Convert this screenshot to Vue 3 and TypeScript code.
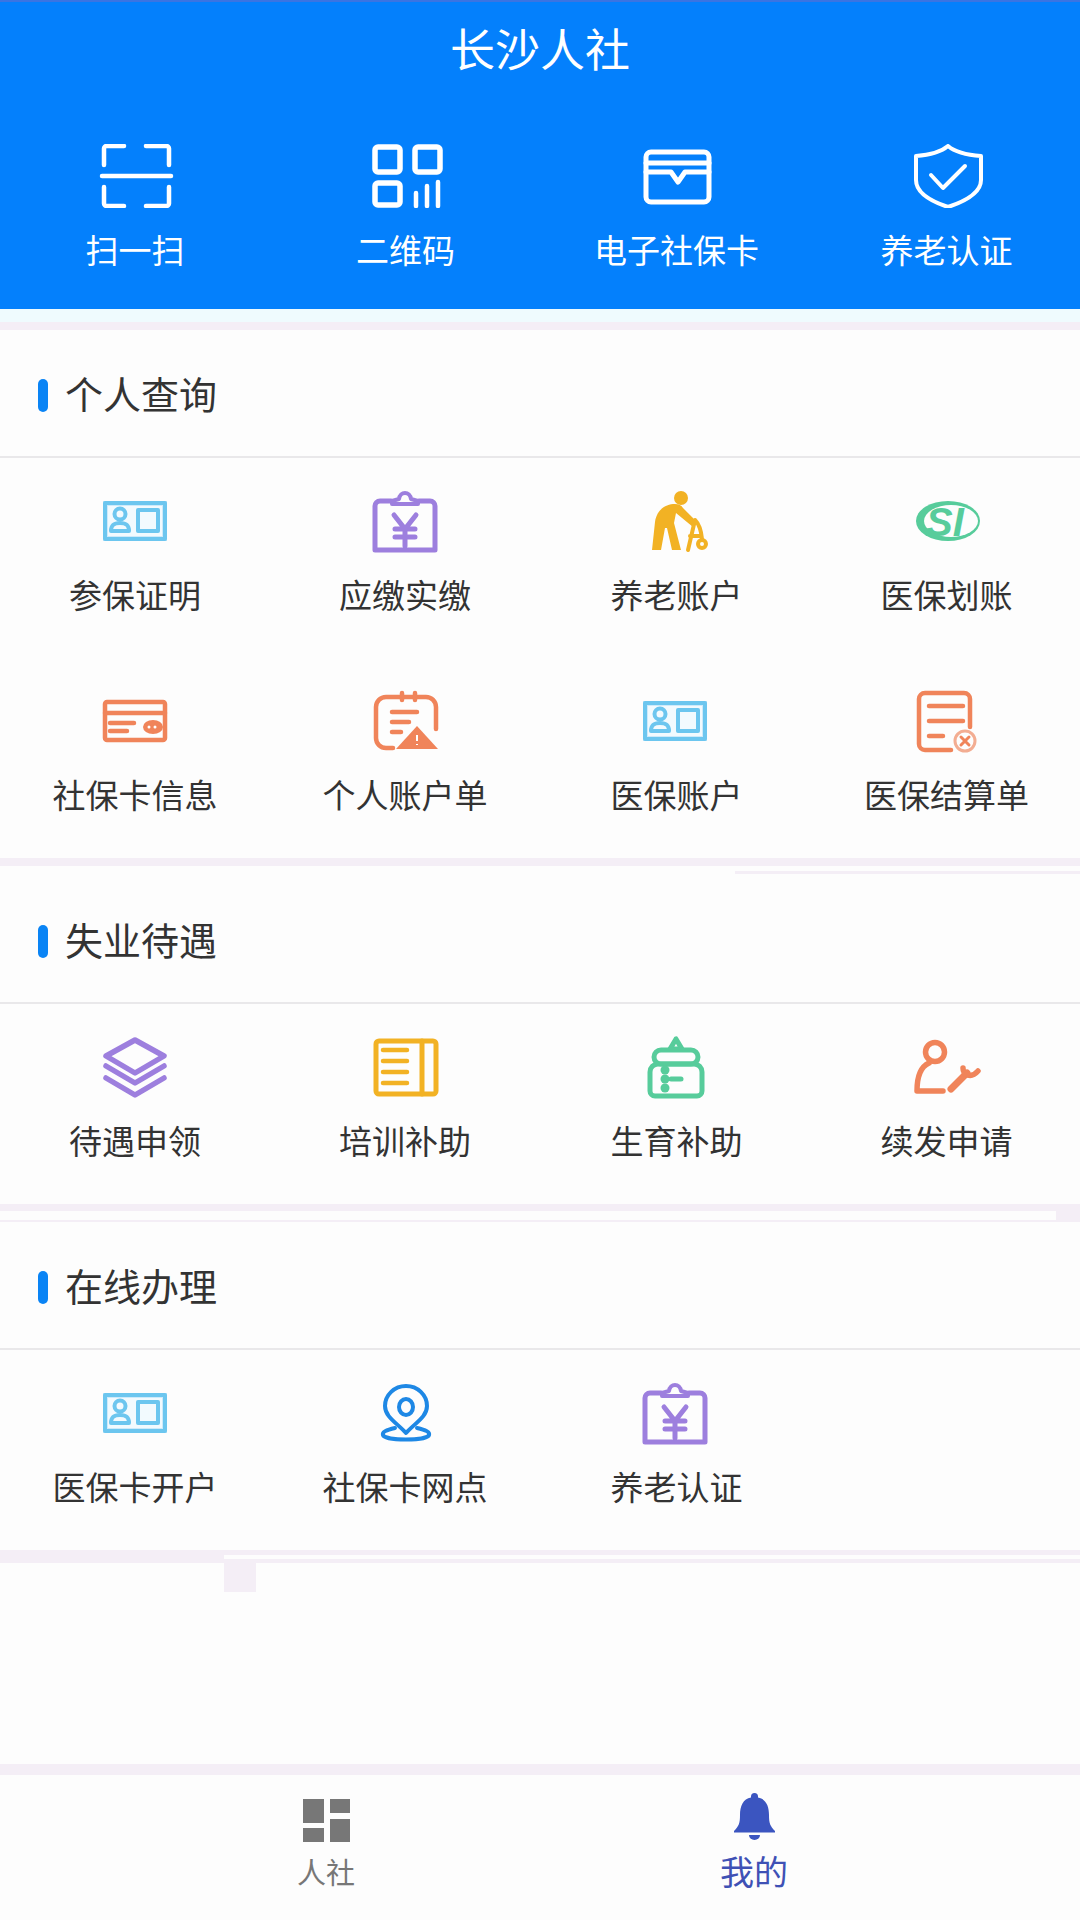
<template>
  <div class="page">
    <header class="top">
      <h1 class="top-title">长沙人社</h1>
      <div class="top-actions">
        <div v-for="item in topActions" :key="item.label" class="top-action">
          <svg class="icon" viewBox="0 0 80 64" v-html="icons[item.icon]"></svg>
          <span>{{ item.label }}</span>
        </div>
      </div>
    </header>

    <section v-for="group in groups" :key="group.title" class="group">
      <div class="band" :class="group.band"></div>
      <div class="group-head">
        <i class="group-mark"></i>
        <h2>{{ group.title }}</h2>
      </div>
      <div class="group-grid">
        <div v-for="item in group.items" :key="item.label" class="cell">
          <svg class="icon" viewBox="0 0 80 64" v-html="icons[item.icon]"></svg>
          <span>{{ item.label }}</span>
        </div>
      </div>
    </section>

    <div class="band band-end"></div>
    <div class="spacer"></div>

    <nav class="tabs">
      <div class="tab">
        <svg class="tab-icon" viewBox="0 0 47 50">
          <rect x="0" y="6" width="21" height="24" />
          <rect x="27" y="6" width="20" height="14" />
          <rect x="0" y="35" width="21" height="14" />
          <rect x="27" y="26" width="20" height="23" />
        </svg>
        <span>人社</span>
      </div>
      <div class="tab active">
        <svg class="tab-icon" viewBox="0 0 41 50">
          <path d="M20.5 0a3.500 3.500 0 0 1 3.500 3.500v1C32 6 35 13 35 22c0 8 1 11 6 16v1.500H0V38c5-5 6-8 6-16C6 13 9 6 17 4.500v-1a3.500 3.500 0 0 1 3.500-3.500Z" />
          <path d="M15 42h11a5.500 5 0 0 1-11 0Z" />
        </svg>
        <span>我的</span>
      </div>
    </nav>
  </div>
</template>

<script setup lang="ts">
interface Item {
  label: string
  icon: string
}

interface Group {
  title: string
  band: string
  items: Item[]
}

const line = (color: string, width: number, body: string) =>
  `<g fill="none" stroke="${color}" stroke-width="${width}" stroke-linecap="round" stroke-linejoin="round">${body}</g>`

const BLUE = '#6cc6ef'
const PURPLE = '#9d7fde'
const ORANGE = '#f0845a'
const YELLOW = '#f2b224'
const GREEN = '#57cc9b'

const idCard = `<rect x="8" y="12" width="64" height="40" fill="#cdeafa"/>
  <rect x="13" y="17" width="54" height="30" fill="#f2fafe"/>` +
  line(BLUE, 4, `<rect x="10" y="14" width="60" height="36"/>
    <circle cx="25" cy="25" r="5.500"/><path d="M16 42c0-6 3-8 9-8s9 2 9 8Z"/>
    <rect x="43" y="21" width="20" height="21"/>`)

const clipboard = line(PURPLE, 5, `<path d="M26 12H15a5 5 0 0 0-5 5v44h60V17a5 5 0 0 0-5-5H54"/>`) +
  line(PURPLE, 4, `<path d="M27 15h26v-3l-7-2c-1-8-11-8-12 0l-7 2Z"/>`) +
  line(PURPLE, 5, `<path d="M29 26l11 14 11-14M40 40v17M30 40h20M30 48h20"/>`)

const icons: Record<string, string> = {
  scan: line('#fff', 4.5, `<path d="M9 21V4.500a2.500 2.500 0 0 1 2.500-2.500H29"/><path d="M51 2h20.500a2.500 2.500 0 0 1 2.500 2.500V21"/>
    <path d="M7 32h69"/><path d="M9 43v16.500a2.500 2.500 0 0 0 2.500 2.500H29"/><path d="M74 43v16.500a2.500 2.500 0 0 1-2.500 2.500H51"/>`),
  qr: line('#fff', 5.5, `<rect x="10" y="3" width="25" height="25" rx="3"/><rect x="50" y="3" width="25" height="25" rx="3"/>
    <rect x="10" y="39" width="25" height="22" rx="3"/>`) +
    line('#fff', 4.5, `<path d="M51 49v13M62 42v20M73 38v24"/>`),
  card: line('#fff', 5, `<rect x="11" y="8" width="63" height="50" rx="5"/><path d="M11 19h63"/><path d="M11 28h25l7 10 7-10h24"/>`),
  shield: line('#fff', 4, `<path d="M43 2c7 6 19 9 33 10v24c0 14-18 22-33 27-15-5-32-13-32-27V12c14-1 25-4 32-10Z"/><path d="M26 31l12 13 22-22"/>`),
  idCard,
  clipboard,
  elder: `<circle cx="46" cy="9" r="7" fill="${YELLOW}"/>
    <path fill="${YELLOW}" d="M40 15c-9 0-18 5-20 18l-3 28h9l4-22h2l5 22h9l-7-27 2-10 17 14 5-4-15-15c-2-3-4-4-8-4Z"/>` +
    line(YELLOW, 4, `<path d="M60 31c4 4 6 9 7 19M60 31l-7 30M55 47h11"/><circle cx="67" cy="55" r="4"/>`),
  si: `<ellipse cx="43" cy="32" rx="32" ry="20" fill="${GREEN}"/><ellipse cx="46" cy="32" rx="27" ry="16" fill="#fdfdfd"/>
    <text x="21" y="47" font-size="40" font-weight="700" font-style="italic" font-family="Liberation Sans, sans-serif" fill="${GREEN}">SI</text>`,
  bankCard: line(ORANGE, 4.5, `<rect x="10" y="13" width="60" height="38" rx="2"/><path d="M10 24h60"/><path d="M15 34h24M15 42h17"/>`) +
    `<ellipse cx="58" cy="38" rx="10" ry="7" fill="${ORANGE}"/><circle cx="54" cy="38" r="1.500" fill="#fff"/><circle cx="60" cy="38" r="1.500" fill="#fff"/>`,
  report: line(ORANGE, 4.5, `<path d="M28 59h-7a10 10 0 0 1-10-10V18a10 10 0 0 1 10-10h40a10 10 0 0 1 10 10v22"/><path d="M37 4v7M50 4v7"/>`) +
    line(ORANGE, 4.5, `<path d="M27 23h25M27 33h17M27 43h9"/>`) +
    `<path d="M52 37l21 23H31Z" fill="${ORANGE}"/><path d="M52 46v6M52 55v1" stroke="#fff" stroke-width="2"/>`,
  bill: line(ORANGE, 4.5, `<path d="M46 61H20a6 6 0 0 1-6-6V10a6 6 0 0 1 6-6h39a6 6 0 0 1 6 6v28"/>`) +
    line(ORANGE, 4.5, `<path d="M24 17h34M24 32h34M24 47h14"/>`) +
    `<circle cx="60" cy="52" r="10" fill="#fdfdfd" stroke="#f3ad92" stroke-width="3"/>` +
    line(ORANGE, 3, `<path d="M56 48l8 8M64 48l-8 8"/>`),
  layers: line(PURPLE, 5.5, `<path d="M40 5l29 16-29 17-29-17Z"/><path d="M11 31l29 17 29-17"/><path d="M11 43l29 17 29-17"/>`),
  book: line(YELLOW, 5, `<rect x="11" y="6" width="60" height="53" rx="3"/><path d="M57 6v53"/>`) +
    line(YELLOW, 4.5, `<path d="M18 15h24M18 26h24M18 37h24M18 48h24"/>`),
  bottle: line(GREEN, 5, `<path d="M41 4l-6 10h12Z"/><path d="M26 15h30a7 7 0 0 1 7 7 7 7 0 0 1-7 7H26a7 7 0 0 1-7-7 7 7 0 0 1 7-7Z"/>
    <path d="M23 29h36a8 8 0 0 1 8 8v19a5 5 0 0 1-5 5H20a5 5 0 0 1-5-5V37a8 8 0 0 1 8-8Z"/><path d="M36 44h10"/>`) +
    `<circle cx="30" cy="35" r="4.500" fill="${GREEN}"/><circle cx="30" cy="44" r="4.500" fill="${GREEN}"/><circle cx="30" cy="53" r="4.500" fill="${GREEN}"/>`,
  userTool: line(ORANGE, 5.5, `<circle cx="30" cy="17" r="9.500"/><path d="M24 28c-9 4-12 14-12 28h26"/>`) +
    line(ORANGE, 7, `<path d="M46 54l16-16"/>`) +
    line(ORANGE, 5.5, `<path d="M58 33c0 7 8 11 15 3"/>`),
  pin: line('#1e88e5', 4, `<path d="M41 52C32 42 20 36 20 25a21 20 0 0 1 42 0c0 11-12 17-21 27Z"/><ellipse cx="41" cy="26" rx="7" ry="8"/>
    <path d="M30 47c-9 2-13 4-12 7 2 6 44 6 46 0 1-3-3-5-12-7"/>`)
}

const topActions: Item[] = [
  { label: '扫一扫', icon: 'scan' },
  { label: '二维码', icon: 'qr' },
  { label: '电子社保卡', icon: 'card' },
  { label: '养老认证', icon: 'shield' }
]

const groups: Group[] = [
  {
    title: '个人查询',
    band: 'band-first',
    items: [
      { label: '参保证明', icon: 'idCard' },
      { label: '应缴实缴', icon: 'clipboard' },
      { label: '养老账户', icon: 'elder' },
      { label: '医保划账', icon: 'si' },
      { label: '社保卡信息', icon: 'bankCard' },
      { label: '个人账户单', icon: 'report' },
      { label: '医保账户', icon: 'idCard' },
      { label: '医保结算单', icon: 'bill' }
    ]
  },
  {
    title: '失业待遇',
    band: 'band-second',
    items: [
      { label: '待遇申领', icon: 'layers' },
      { label: '培训补助', icon: 'book' },
      { label: '生育补助', icon: 'bottle' },
      { label: '续发申请', icon: 'userTool' }
    ]
  },
  {
    title: '在线办理',
    band: 'band-third',
    items: [
      { label: '医保卡开户', icon: 'idCard' },
      { label: '社保卡网点', icon: 'pin' },
      { label: '养老认证', icon: 'clipboard' }
    ]
  }
]
</script>

<style>
body {
  background: #fdfdfd;
}
</style>

<style scoped>
.page {
  display: flex;
  flex-direction: column;
  height: 1920px;
  background: #fdfdfd;
  color: #333;
  font-family: "Noto Sans CJK SC", "Liberation Sans", sans-serif;
}

.top {
  height: 309px;
  box-sizing: border-box;
  background: #0480fc;
  border-top: 2px solid #3a74e2;
  color: #fff;
}

.top-title {
  margin: 0;
  height: 98px;
  font-size: 45px;
  font-weight: 400;
  line-height: 91px;
  text-align: center;
}

.top-actions {
  display: grid;
  grid-template-columns: repeat(4, 270px);
  padding-top: 44px;
}

.top-action,
.cell {
  display: flex;
  flex-direction: column;
  align-items: center;
}

.top-action span {
  margin-top: 19px;
  font-size: 33px;
  line-height: 44px;
}

.top-action:nth-child(2) span {
  margin-left: 1px;
}

.top-action:nth-child(n + 3) span {
  margin-left: 3px;
}

.icon {
  display: block;
  width: 80px;
  height: 64px;
}

.band {
  background-repeat: no-repeat;
}

.band-first {
  height: 21px;
  background-image: linear-gradient(#effbfe 13px, #f4eef6 13px);
}

.band-second {
  height: 18px;
  background-image: linear-gradient(#f4eef6, #f4eef6), linear-gradient(#f4eef6, #f4eef6);
  background-position: 0 0, 100% 13px;
  background-size: 100% 8px, 345px 3px;
}

.band-third {
  height: 18px;
  background-image: linear-gradient(#f4eef6, #f4eef6), linear-gradient(#f4eef6, #f4eef6), linear-gradient(#f4eef6, #f4eef6);
  background-position: 0 0, 0 16px, 100% 0;
  background-size: 100% 7px, 100% 2px, 24px 100%;
}

.band-end {
  height: 13px;
  background-image: linear-gradient(#f4eef6, #f4eef6), linear-gradient(#f4eef6, #f4eef6), linear-gradient(#f4eef6, #f4eef6);
  background-position: 0 0, 100% 0, 100% 9px;
  background-size: 224px 100%, 856px 5px, 856px 4px;
}

.group-head {
  display: flex;
  align-items: center;
  height: 126px;
  padding: 4px 0 0 38px;
  box-sizing: border-box;
}

.group-mark {
  width: 10px;
  height: 33px;
  margin-right: 17px;
  border-radius: 5px;
  background: #0a84f5;
}

.group-head h2 {
  margin: 0 0 4px;
  font-size: 38px;
  font-weight: 400;
  line-height: 50px;
}

.group-grid {
  display: grid;
  grid-template-columns: repeat(4, 270px);
  grid-auto-rows: 200px;
  border-top: 2px solid #e9e8ea;
}

.cell {
  padding-top: 31px;
}

.cell span {
  margin-top: 19px;
  font-size: 33px;
  line-height: 44px;
}

.cell:nth-child(4n + 3) span,
.cell:nth-child(4n) span {
  margin-left: 3px;
}

.spacer {
  flex: 1;
  background: linear-gradient(#f4eef6, #f4eef6) 224px 0 / 32px 29px no-repeat;
}

.tabs {
  display: flex;
  height: 156px;
  box-sizing: border-box;
  padding: 18px 112px 0;
  border-top: 11px solid #f4eef6;
}

.tab {
  display: flex;
  flex: 1;
  flex-direction: column;
  align-items: center;
  color: #777;
  font-size: 29px;
  line-height: 40px;
}

.tab span {
  margin-top: 8px;
}

.tab-icon {
  display: block;
  height: 50px;
  fill: #777;
}

.tab.active {
  color: #3f51b5;
  font-size: 34px;
}

.tab.active .tab-icon {
  fill: #3b55c0;
}
</style>
